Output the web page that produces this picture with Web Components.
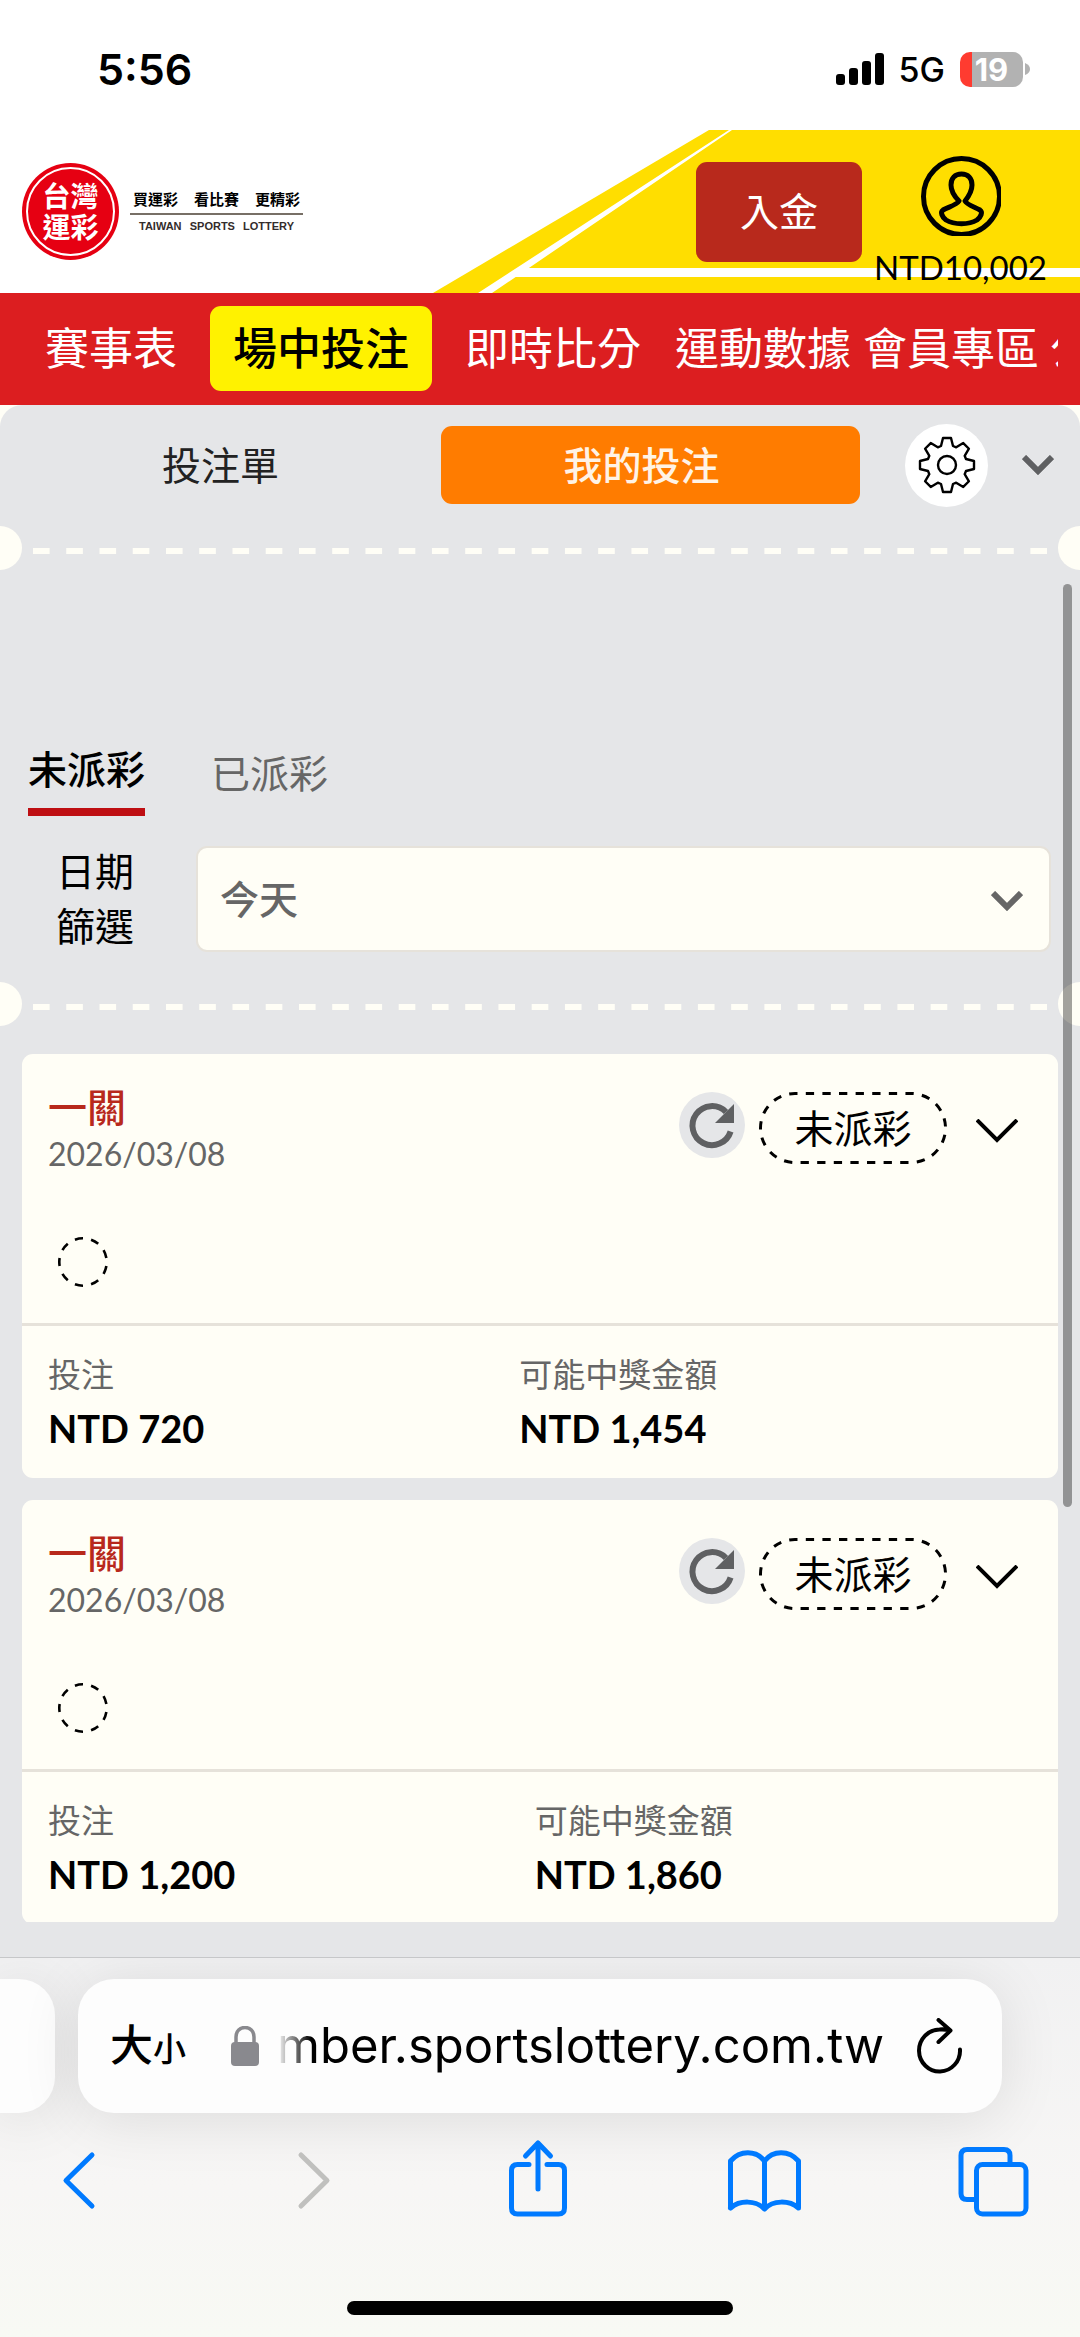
<!DOCTYPE html>
<html lang="zh-Hant">
<head>
<meta charset="utf-8">
<meta name="viewport" content="width=device-width, initial-scale=1">
<title>台灣運彩 - 我的投注</title>
<style>
:root{--cream:#fffef6;--panel:#e5e6e8;--red:#b8291c;--grey:#666;--line:#e6e2da}
html,body{margin:0;height:100%}
body{font-family:Lato,"Noto Sans CJK TC",sans-serif;font-size:39px;line-height:55px;color:#000;background:#fff}
</style>
</head>
<body>
<lottery-app>
  <status-bar slot="top" time="5:56" network="5G" battery="19"></status-bar>
  <site-header slot="top" balance="NTD10,002">入金</site-header>
  <site-nav slot="top"></site-nav>
  <bet-tabs></bet-tabs>
  <ticket-divider></ticket-divider>
  <payout-filter></payout-filter>
  <ticket-divider></ticket-divider>
  <bet-list>
    <bet-card date="2026/03/08" status="未派彩" stake="NTD 720" payout="NTD 1,454">一關</bet-card>
    <bet-card date="2026/03/08" status="未派彩" stake="NTD 1,200" payout="NTD 1,860">一關</bet-card>
  </bet-list>
  <browser-bar slot="bottom" host="mber.sportslottery.com.tw"></browser-bar>
</lottery-app>

<script>
const RESET = `
  *,:host{box-sizing:border-box}
  svg{display:block;flex:none}
  button{font:inherit;color:inherit;background:none;border:0;padding:0;margin:0;cursor:pointer}
  a{color:inherit;text-decoration:none}`;

function define(name, render) {
  customElements.define(name, class extends HTMLElement {
    constructor() {
      super();
      this.attachShadow({ mode: 'open' });
    }
    connectedCallback() {
      const t = document.createElement('template');
      t.innerHTML = render(this);
      this.shadowRoot.replaceChildren(t.content.cloneNode(true));
    }
  });
}

/* Page frame: top bars, ticket panel with the scroll thumb, browser bar */
define('lottery-app', () => `
  <style>${RESET}
    :host{display:flex;flex-direction:column;height:100vh;overflow:hidden}
    .back{flex:1;min-height:0;display:flex;background:var(--cream)}
    main{flex:1;min-width:0;display:flex;flex-direction:column;position:relative;overflow:hidden;
      padding:18px 0 35px;background:var(--panel);border-radius:22px 22px 0 0}
    .thumb{position:absolute;right:8px;top:179px;width:9px;height:923px;border-radius:5px;background:rgba(0,0,0,.36)}
  </style>
  <slot name="top"></slot>
  <div class="back"><main><slot></slot><div class="thumb"></div></main></div>
  <slot name="bottom"></slot>`);

define('status-bar', el => `
  <style>${RESET}
    :host{display:flex;justify-content:space-between;align-items:center;height:130px;padding:8px 50px 0 97px;
      font-family:Inter,sans-serif;background:#fff}
    .time{font-size:43px;font-weight:600}
    .right{display:flex;align-items:center;gap:15px}
    .net{font-size:34px;font-weight:500}
    .batt{display:flex;align-items:center;gap:2px}
    .cell{width:63px;height:35px;border-radius:10px;text-align:center;font-size:31px;line-height:35px;font-weight:700;color:#fff;
      background:linear-gradient(90deg,#ff3b30 12px,#b2b2b2 12px)}
  </style>
  <span class="time">${el.getAttribute('time')}</span>
  <div class="right">
    <svg width="48" height="32" viewBox="0 0 48 32"><rect y="21" width="9" height="11" rx="3"/><rect x="13" y="15" width="9" height="17" rx="3"/><rect x="26" y="8" width="9" height="24" rx="3"/><rect x="39" width="9" height="32" rx="3"/></svg>
    <span class="net">${el.getAttribute('network')}</span>
    <div class="batt"><span class="cell">${el.getAttribute('battery')}</span>
    <svg width="5" height="12" viewBox="0 0 5 12"><path d="M0 0Q5 2 5 6T0 12z" fill="#b2b2b2"/></svg></div>
  </div>`);

define('brand-logo', () => `
  <style>${RESET}
    :host{display:flex;align-items:center;gap:11px}
    .seal{width:97px;height:97px;border-radius:50%;background:#e60012;padding:4px;flex:none}
    .ring{height:100%;border:2px solid #fff;border-radius:50%;display:flex;flex-direction:column;align-items:center;justify-content:center;
      color:#fff;font-size:28px;line-height:31px;font-weight:700}
    .words{width:173px;text-align:center}
    .zh{display:flex;justify-content:space-between;padding:0 3px;font-size:15px;line-height:27px;font-weight:700}
    .en{display:flex;justify-content:space-between;padding:0 9px;border-top:2px solid #776f66;
      font:700 11px/22px "Liberation Sans",sans-serif;color:#332c2b}
  </style>
  <div class="seal"><div class="ring"><span>台灣</span><span>運彩</span></div></div>
  <div class="words">
    <div class="zh"><span>買運彩</span><span>看比賽</span><span>更精彩</span></div>
    <div class="en"><span>TAIWAN</span><span>SPORTS</span><span>LOTTERY</span></div>
  </div>`);

define('site-header', el => `
  <style>${RESET}
    :host{display:flex;position:relative;height:163px;padding:0 33px 0 22px;align-items:center;background:#fff;overflow:hidden}
    .art{position:absolute;right:0;top:0}
    brand-logo,.deposit,.user{position:relative}
    .deposit{margin-left:auto;width:166px;height:100px;border-radius:11px;background:var(--red);color:#fff}
    .user{margin-left:12px;display:flex;flex-direction:column;align-items:center;font-size:33px;line-height:44px;gap:9px;padding-top:26px;height:163px}
  </style>
  <svg class="art" width="647" height="163" viewBox="0 0 647 163">
    <path d="M276 0H647V163H0z" fill="#ffde00"/>
    <path d="M296 0H299L59 163H45zM94 138H647V147H82z" fill="#fff"/>
  </svg>
  <brand-logo></brand-logo>
  <button class="deposit"><slot></slot></button>
  <a class="user" href="#account">
    <svg width="80" height="80" viewBox="0 0 80 80" fill="none" stroke="#000" stroke-width="5" stroke-linecap="round" stroke-linejoin="round">
      <circle cx="40.500" cy="40.500" r="38"/>
      <path d="M38 45C33 40 30 35 30 29C30 22 34 18 40.500 18C47 18 51 22 51 29C51 35 48 40 44 45C46 49 54 51 59 54C62 56 60 61 56 64C48 69 33 69 25 64C21 61 19 56 22 54C27 51 36 49 38 45" /></svg>
    <span>${el.getAttribute('balance')}</span>
  </a>`);

define('site-nav', () => `
  <style>${RESET}
    :host{display:block;background:#dc1e20;padding:13px 22px 14px 22px}
    nav{display:flex;gap:10px;overflow:hidden;font-size:44px;line-height:85px;color:#fff;white-space:nowrap}
    a{flex:none}
    .plain{padding:0 1px}
    .wide{padding:0 23px;border-radius:11px}
    .on{background:#fff200;color:#000;font-weight:500}
  </style>
  <nav><a class="wide" href="#schedule">賽事表</a><a class="wide on" href="#live">場中投注</a><a class="wide" href="#scores">即時比分</a><a class="plain" href="#stats">運動數據</a><a class="plain" href="#member">會員專區</a><a href="#notice">公</a></nav>`);

/* Outline of an eight-toothed gear centred on 0,0 */
const gear = (() => {
  let d = '';
  for (let i = 0; i < 8; i++) {
    const a = i * Math.PI / 4, c = Math.cos(a), s = Math.sin(a);
    for (const [x, y] of [[-6, -19], [-4, -27], [4, -27], [6, -19]])
      d += (d ? 'L' : 'M') + (x * c - y * s).toFixed(2) + ' ' + (x * s + y * c).toFixed(2);
  }
  return d + 'z';
})();

define('bet-tabs', () => `
  <style>${RESET}
    :host{display:flex;align-items:center;height:84px;padding-right:26px}
    .tabs{flex:1;display:grid;grid-template-columns:441fr 419fr}
    .tabs button{height:78px;border-radius:11px;color:#222}
    .tabs .on{padding-right:18px;background:#ff7c00;color:#fff3e6;font-weight:500}
    .gear{width:83px;height:83px;border-radius:50%;background:#fff;margin:0 34px 0 45px;display:grid;place-items:center}
  </style>
  <div class="tabs"><button>投注單</button><button class="on">我的投注</button></div>
  <button class="gear" aria-label="設定"><svg width="58" height="58" viewBox="-29 -29 58 58" fill="none" stroke="#000" stroke-width="2.400" stroke-linejoin="round"><path d="${gear}"/><circle r="9"/></svg></button>
  <button aria-label="收合"><svg width="32" height="20" viewBox="0 0 32 20" fill="none" stroke="#5f6062" stroke-width="6"><path d="M2 2L16 16L30 2"/></svg></button>`);

define('ticket-divider', () => `
  <style>${RESET}
    :host{display:flex;flex:none;height:44px;margin-top:19px;justify-content:space-between;align-items:center;overflow:hidden}
    :host(:nth-of-type(n+2)){margin-top:28px}
    i{flex:none;width:22px;height:44px;background:var(--cream);border-radius:0 22px 22px 0}
    i:last-child{border-radius:22px 0 0 22px}
    svg{flex:1;min-width:0;margin:5px 11px 0}
  </style>
  <i></i><svg width="100%" height="6"><line x1="0" x2="100%" y1="3" y2="3" pathLength="61" stroke="#fffef6" stroke-width="6" stroke-dasharray="1 1"/></svg><i></i>`);

define('payout-filter', () => `
  <style>${RESET}
    :host{display:block;padding:172px 29px 0 28px}
    .tabs{display:flex;align-items:flex-end;gap:66px}
    .tabs button{line-height:55px;padding-bottom:15px;color:var(--grey)}
    .tabs .on{padding-bottom:11px;border-bottom:8px solid #be0e12;color:#000;font-weight:500}
    .row{display:flex;align-items:center;margin-top:28px}
    label{width:78px;margin:0 62px 0 28px;text-align:right}
    .box{flex:1;display:grid;align-items:center}
    .box>*{grid-area:1/1}
    select{appearance:none;width:100%;height:106px;padding:0 22px;border:2px solid var(--line);border-radius:11px;background:var(--cream);
      font:inherit;font-weight:500;color:var(--grey)}
    svg{justify-self:end;margin:4px 28px 0;pointer-events:none}
  </style>
  <div class="tabs"><button class="on">未派彩</button><button>已派彩</button></div>
  <div class="row"><label for="day">日期<br>篩選</label>
    <div class="box"><select id="day"><option>今天</option></select>
    <svg width="32" height="20" viewBox="0 0 32 20" fill="none" stroke="#666" stroke-width="6"><path d="M2 2L16 16L30 2"/></svg></div></div>`);

define('bet-list', () => `
  <style>:host{flex:1;min-height:0;overflow:hidden;display:flex;flex-direction:column;gap:22px;margin:28px 22px 0}</style>
  <slot></slot>`);

define('bet-card', el => `
  <style>${RESET}
    :host{display:block;flex:none;background:var(--cream);border-radius:11px}
    .top{padding:26px 26px 36px;border-bottom:3px solid var(--line)}
    .head{display:flex;align-items:flex-start;gap:14px}
    .name{flex:1}
    h2{margin:0;font-size:39px;line-height:54px;font-weight:500;color:var(--red)}
    time{display:block;font-size:32px;line-height:40px;color:var(--grey)}
    .head button,.pill{margin-top:12px}
    .refresh{width:66px;height:66px;border-radius:50%;background:var(--panel)}
    .pill{display:grid;width:188px;height:72px;place-items:center}
    .pill>*{grid-area:1/1}
    .more{width:71px;height:78px;display:grid;place-items:center}
    .dot{margin:63px 0 0 10px}
    dl{display:flex;margin:0;padding:22px 26px 22px}
    dl div{flex:1 1 auto}
    dt{font-size:33px;line-height:52px;color:var(--grey)}
    dd{margin:0;font-size:38px;line-height:56px;font-weight:700}
  </style>
  <div class="top">
    <div class="head">
      <div class="name"><h2><slot></slot></h2><time>${el.getAttribute('date')}</time></div>
      <button class="refresh" aria-label="更新"><svg width="66" height="66" viewBox="0 0 66 66"><path d="M51.600 39.500A19.500 19.500 0 1 1 47 20" fill="none" stroke="#5f6062" stroke-width="6"/><path d="M55 12V31H36z" fill="#5f6062"/></svg></button>
      <div class="pill"><svg width="188" height="72" viewBox="0 0 188 72" fill="none"><rect x="1.500" y="1.500" width="185" height="69" rx="34.500" stroke="#000" stroke-width="3" pathLength="54" stroke-dasharray="1 1" stroke-dashoffset=".7"/></svg><span>${el.getAttribute('status')}</span></div>
      <button class="more" aria-label="展開"><svg width="42" height="24" viewBox="0 0 42 24" fill="none" stroke="#000" stroke-width="4"><path d="M1 1L21 21L41 1"/></svg></button>
    </div>
    <svg class="dot" width="50" height="50" viewBox="0 0 50 50"><circle cx="25" cy="25" r="23.700" fill="none" stroke="#000" stroke-width="2.600" pathLength="18" stroke-dasharray="1 1" stroke-dashoffset="-.5"/></svg>
  </div>
  <dl><div><dt>投注</dt><dd>${el.getAttribute('stake')}</dd></div><div><dt>可能中獎金額</dt><dd>${el.getAttribute('payout')}</dd></div></dl>`);

define('browser-bar', el => `
  <style>${RESET}
    :host{display:flex;flex-direction:column;flex:none;height:380px;overflow:hidden;border-top:1px solid #c6c7c9;
      background:linear-gradient(#f1f1f2,#f7f6f5 60%,#f8f9f4)}
    .row{display:flex;gap:23px;padding:21px 78px 0 0}
    .prev{width:55px;height:134px;border-radius:0 36px 36px 0;background:#fdfdfd;box-shadow:0 6px 60px rgba(0,0,0,.1)}
    .url{flex:1;min-width:0;height:134px;border-radius:36px;background:#fdfdfd;display:flex;align-items:center;padding:0 39px 0 32px;box-shadow:0 6px 60px rgba(0,0,0,.1)}
    .size{display:flex;align-items:baseline;font-size:43px;font-weight:500;margin-right:45px}
    .size small{font-size:33px}
    .host{flex:1;min-width:0;display:flex;justify-content:flex-end;overflow:hidden;white-space:nowrap;margin:0 33px 0 12px;
      font:49px/64px Inter,sans-serif;-webkit-mask:linear-gradient(90deg,transparent 6px,#000 40px);mask:linear-gradient(90deg,transparent 6px,#000 40px)}
    .tools{display:flex;justify-content:space-between;padding:26px 50px 0 40px;fill:none;stroke:#007aff;stroke-width:5;stroke-linecap:round;stroke-linejoin:round}
    .off{stroke:#c0c0be}
    .home{width:386px;height:14px;border-radius:7px;background:#000;margin:auto auto 22px}
  </style>
  <div class="row">
    <div class="prev"></div>
    <div class="url">
      <button class="size">大<small>小</small></button>
      <svg width="28" height="40" viewBox="0 0 28 40"><rect y="16" width="28" height="24" rx="4" fill="#89898e"/><path d="M5 18V11C5 5 9 1.500 14 1.500S23 5 23 11V18" fill="none" stroke="#89898e" stroke-width="3.500"/></svg>
      <span class="host">${el.getAttribute('host')}</span>
      <button aria-label="重新載入"><svg width="46" height="56" viewBox="0 0 46 56" fill="none" stroke="#000" stroke-width="4" stroke-linecap="round" stroke-linejoin="round"><path d="M43 31.500A20.500 21 0 1 1 22.500 11.500Q28 11 33 12.500M21.500 2L33.500 12.500L21.500 24"/></svg></button>
    </div>
  </div>
  <div class="tools">
    <button aria-label="上一頁"><svg width="76" height="80" viewBox="0 0 76 80"><path d="M52 16L26 41.500L52 67"/></svg></button>
    <button class="off" aria-label="下一頁"><svg width="76" height="80" viewBox="0 0 76 80"><path d="M32 16L58 41.500L32 67"/></svg></button>
    <button aria-label="分享"><svg width="76" height="80" viewBox="0 0 76 80"><path d="M32 25.500H20.500Q14.500 25.500 14.500 31.500V69Q14.500 75 20.500 75H61.500Q67.500 75 67.500 69V31.500Q67.500 25.500 61.500 25.500H50M41 50V4M28.500 17L41 4L53.500 17"/></svg></button>
    <button aria-label="書籤"><svg width="76" height="80" viewBox="0 0 76 80"><path d="M4.500 69V22C14 11 30 11 38.500 22C47 11 63 11 72.500 22V69C63 61 47 61 38.500 70C30 61 14 61 4.500 69M38.500 22V70"/></svg></button>
    <button aria-label="分頁"><svg width="76" height="80" viewBox="0 0 76 80"><path d="M21 60.500H13Q7 60.500 7 54.500V16.500Q7 10.500 13 10.500H50Q56 10.500 56 16.500V25"/><rect x="22.500" y="25.500" width="49.500" height="49.500" rx="6"/></svg></button>
  </div>
  <div class="home"></div>`);
</script>
</body>
</html>
